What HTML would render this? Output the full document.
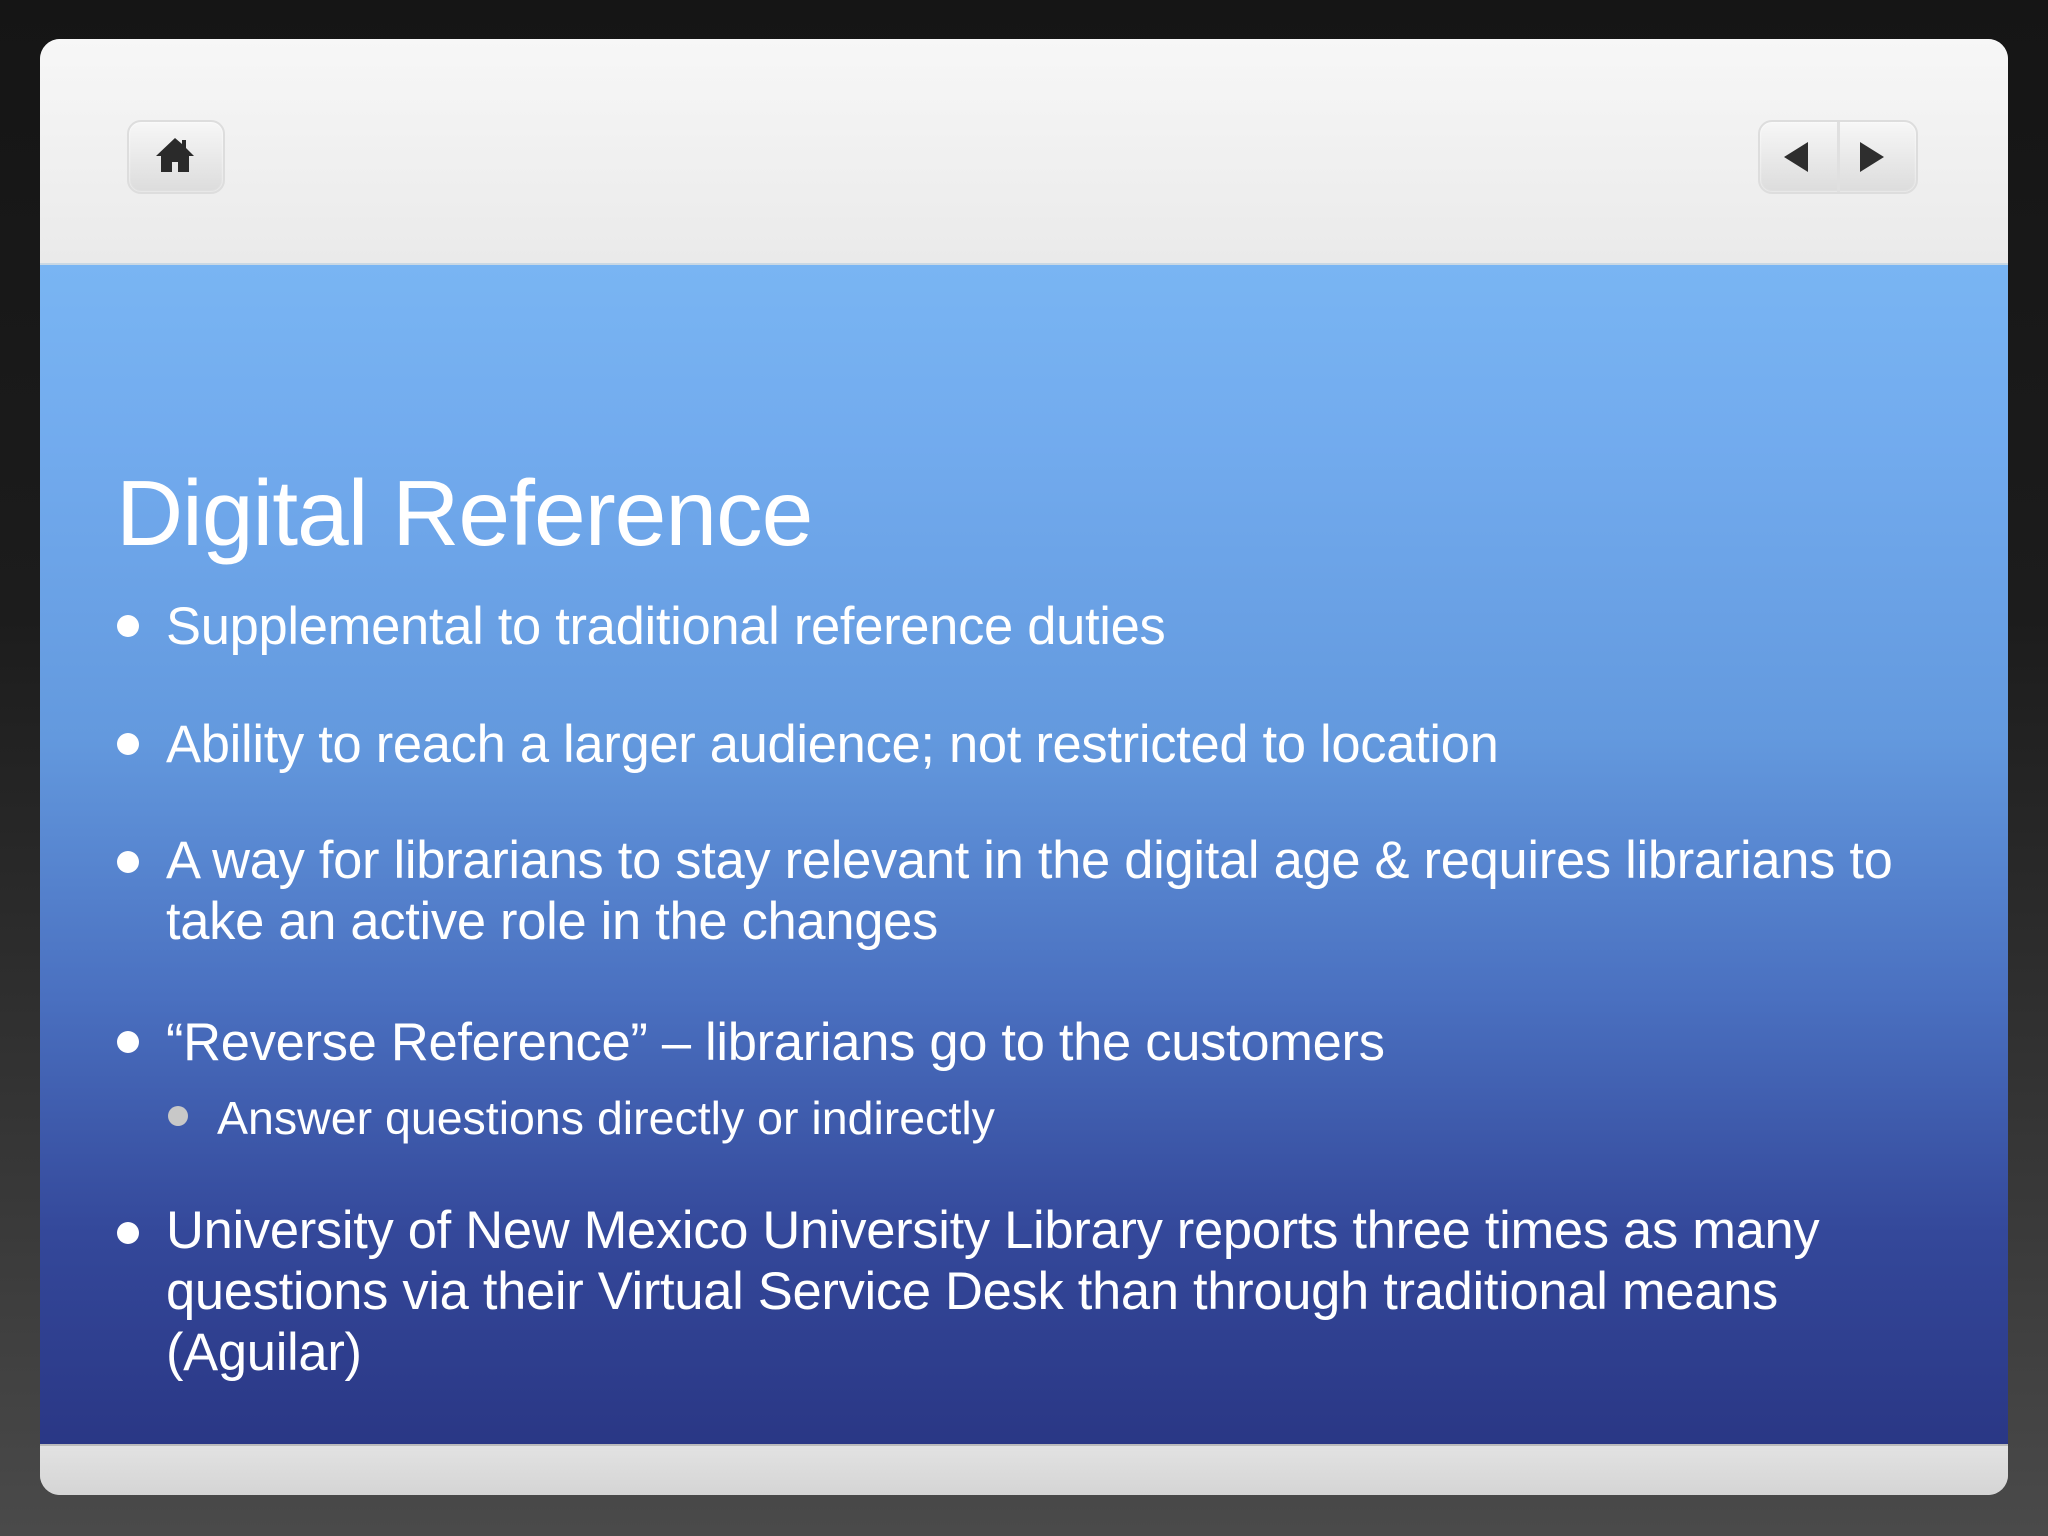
<!DOCTYPE html>
<html><head><meta charset="utf-8"><style>
html,body{margin:0;padding:0}
body{width:2048px;height:1536px;overflow:hidden;position:relative;font-family:"Liberation Sans",sans-serif;
background:linear-gradient(180deg,#151515 0%,#1c1c1c 40%,#3a3a3a 80%,#4a4a4a 100%);}
.frame{position:absolute;left:40px;top:39px;width:1968px;height:1456px;border-radius:20px;overflow:hidden;
background:linear-gradient(180deg,#f8f8f8 0%,#efefef 100%);}
.top{position:absolute;left:0;top:0;width:100%;height:224px;background:linear-gradient(180deg,#f7f7f7,#eaeaea);}
.blue{position:absolute;left:0;top:224px;width:100%;height:1181px;
background:linear-gradient(180deg,#79b5f3 0%,#72abee 15%,#6399de 40%,#4a70c0 62%,#34489a 82%,#2a3785 100%);border-top:2px solid #c9d8e4;}
.bot{position:absolute;left:0;top:1405px;width:100%;height:51px;background:linear-gradient(180deg,#e2e2e2,#d4d4d4);border-top:2px solid #bbb}
.btn{position:absolute;border:2px solid #ddd;border-radius:14px;background:linear-gradient(180deg,#f7f7f7,#dcdcdc);box-shadow:0 0 2px #fff inset}
.t{position:absolute;color:#fff;white-space:nowrap}
.title{left:116px;top:460px;font-size:93px;letter-spacing:-1px}
.b{font-size:52.5px;left:166px;letter-spacing:-0.3px}
.dot{position:absolute;width:22px;height:22px;border-radius:50%;background:#fff}
.s{font-size:46.5px;left:217px}
</style></head><body>
<div class="frame">
<div class="top"></div>
<div class="blue"></div>
<div class="bot"></div>
<div class="btn" style="left:87px;top:81px;width:94px;height:70px"></div>
<svg style="position:absolute;left:113px;top:95px" width="44" height="44" viewBox="0 0 44 44"><path d="M22 4 L3 22 L8 22 L8 38 L19 38 L19 28 L25 28 L25 38 L36 38 L36 22 L41 22 L33 14 L33 6 L29 6 L29 10 Z" fill="#2a2a2a"/></svg>
<div class="btn" style="left:1718px;top:81px;width:156px;height:70px"></div>
<div style="position:absolute;left:1797px;top:83px;width:3px;height:70px;background:#e0e0e0"></div>
<svg style="position:absolute;left:1742px;top:96px" width="110" height="44"><path d="M2 22 L26 7 L26 37 Z" fill="#2e2e2e"/><path d="M78 7 L102 22 L78 37 Z" fill="#2e2e2e"/></svg>
</div>
<div class="t title">Digital Reference</div>
<div class="dot" style="left:117px;top:615px"></div>
<div class="t b" style="top:596px">Supplemental to traditional reference duties</div>
<div class="dot" style="left:117px;top:733px"></div>
<div class="t b" style="top:714px">Ability to reach a larger audience; not restricted to location</div>
<div class="dot" style="left:117px;top:851px"></div>
<div class="t b" style="top:830px;line-height:61px">A way for librarians to stay relevant in the digital age &amp; requires librarians to<br>take an active role in the changes</div>
<div class="dot" style="left:117px;top:1031px"></div>
<div class="t b" style="top:1012px">“Reverse Reference” – librarians go to the customers</div>
<div class="dot" style="left:168px;top:1106px;width:20px;height:20px;background:#c8c8c8"></div>
<div class="t s" style="top:1091px">Answer questions directly or indirectly</div>
<div class="dot" style="left:117px;top:1222px"></div>
<div class="t b" style="top:1200px;line-height:61px">University of New Mexico University Library reports three times as many<br>questions via their Virtual Service Desk than through traditional means<br>(Aguilar)</div>
</body></html>
